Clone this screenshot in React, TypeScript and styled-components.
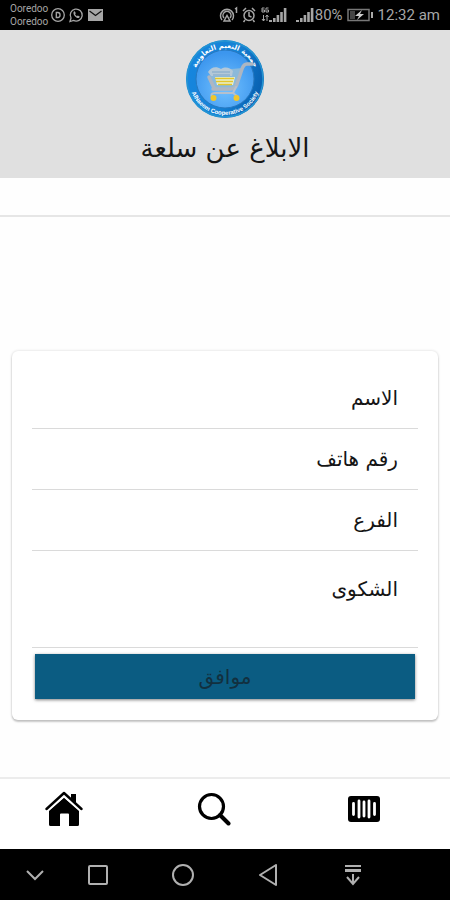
import React from "react";
import styled, { createGlobalStyle } from "styled-components";

const GlobalStyle = createGlobalStyle`
  *, *::before, *::after { box-sizing: border-box; }
  body { margin: 0; background: #fefefe; }
  button, input, textarea { font: inherit; color: inherit; }
  svg { display: block; flex: none; }
`;

const Page = styled.div`
  min-height: 100vh;
  display: flex;
  flex-direction: column;
  font-family: "DejaVu Sans", sans-serif;
  color: #151515;
`;

const StatusBar = styled.div`
  height: 30px;
  padding: 0 10px;
  display: flex;
  align-items: center;
  justify-content: space-between;
  background: #000;
  color: #a6a6a6;
  font-family: Roboto, sans-serif;
  font-size: 15px;
  white-space: nowrap;
`;

const StatusGroup = styled.div<{ $gap: number }>`
  display: flex;
  align-items: center;
  gap: ${(p) => p.$gap}px;
`;

const Carriers = styled.div`
  display: flex;
  flex-direction: column;
  font-size: 10px;
  line-height: 13px;
`;

const Header = styled.header`
  height: 148px;
  display: flex;
  flex-direction: column;
  align-items: center;
  padding-top: 9px;
  background: #e0e0e0;
`;

const Title = styled.h1`
  margin: 9px 0 0;
  font-size: 26px;
  line-height: 40px;
  font-weight: 400;
`;

const Divider = styled.hr`
  width: 100%;
  height: 2px;
  margin: 37px 0 0;
  border: 0;
  background: #e6e6e6;
`;

const Main = styled.main`
  flex: 1;
  padding: 134px 12px 40px;
`;

const Card = styled.form`
  padding: 17px 20px 21px;
  border-radius: 6px;
  background: #fff;
  box-shadow: 0 2px 2px rgba(0, 0, 0, 0.2), 0 0 3px rgba(0, 0, 0, 0.16);
`;

const Field = styled.div<{ $tall?: boolean }>`
  display: flex;
  align-items: ${(p) => (p.$tall ? "flex-start" : "center")};
  gap: 12px;
  height: ${(p) => (p.$tall ? 97 : 61)}px;
  padding: ${(p) => (p.$tall ? "22px 20px 8px" : "0 20px")};
  border-bottom: 1px solid #dadada;
`;

const Label = styled.label`
  font-size: 20px;
  line-height: 32px;
`;

const TextInput = styled.input`
  flex: 1;
  min-width: 0;
  height: 40px;
  border: 0;
  outline: 0;
  background: transparent;
`;

const TextArea = styled.textarea`
  flex: 1;
  min-width: 0;
  height: 60px;
  border: 0;
  outline: 0;
  resize: none;
  background: transparent;
`;

const Submit = styled.button`
  display: block;
  width: calc(100% - 6px);
  height: 45px;
  margin: 6px 3px 0;
  padding: 0;
  border: 0;
  background: #0b5c82;
  color: #12303f;
  font-size: 20px;
  box-shadow: 0 1px 3px rgba(0, 0, 0, 0.5);
`;

const TabBar = styled.nav`
  display: grid;
  grid-template-columns: repeat(3, 1fr);
  height: 72px;
  border-top: 2px solid #ececec;
  background: #fff;
`;

const Tab = styled.a`
  display: flex;
  align-items: center;
  justify-content: center;
  padding: 0 22px 10px 0;
  color: #000;
`;

const SystemBar = styled.div`
  display: grid;
  grid-template-columns: 55fr 85fr 85fr 85fr 85fr 55fr;
  height: 51px;
  background: #000;
`;

const SystemButton = styled.button<{ $edge?: boolean }>`
  display: flex;
  align-items: center;
  justify-content: center;
  padding: ${(p) => (p.$edge ? "0 0 0 14px" : "0")};
  border: 0;
  background: transparent;
  color: #b0b0b0;
`;

const Signal = () => (
  <svg width="18" height="16" viewBox="0 0 18 16" fill="currentColor" aria-hidden="true">
    <path d="M0 13h3v2H0zM4 11h2.6v4H4zM7.6 8h2.6v7H7.6zM11.2 5h2.6v10h-2.6zM14.8 1h2.6v14h-2.6z" />
  </svg>
);

const Logo = () => (
  <svg width="80" height="80" viewBox="0 0 80 80" role="img" aria-label="شعار الجمعية">
    <defs>
      <linearGradient id="ring" x1="0" x2="1" y1="0.3" y2="0.6">
        <stop offset="0" stopColor="#1686df" />
        <stop offset="0.55" stopColor="#1682d5" />
        <stop offset="1" stopColor="#075eae" />
      </linearGradient>
      <radialGradient id="disc" cx="0.5" cy="0.65" r="0.6">
        <stop offset="0" stopColor="#72c1ff" />
        <stop offset="1" stopColor="#3c96ee" />
      </radialGradient>
      <path id="arcTop" d="M9 40a31 31 0 0 1 62 0" />
      <path id="arcBottom" d="M4 40a36 36 0 0 0 72 0" />
    </defs>
    <circle cx="40" cy="40" r="39" fill="url(#ring)" />
    <circle cx="40" cy="40" r="38" fill="none" stroke="#2494d2" strokeWidth="1.5" />
    <circle cx="40" cy="40" r="29" fill="url(#disc)" stroke="#2878bf" strokeWidth="1" />
    <text fill="#fff" fontSize="7" fontWeight="700" fontFamily="DejaVu Sans, sans-serif" direction="rtl">
      <textPath href="#arcTop" startOffset="50%" textAnchor="middle">جمعية النعيم التعاونية</textPath>
    </text>
    <text fill="#fff" fontSize="6" fontWeight="700" fontFamily="Liberation Sans, sans-serif" direction="ltr">
      <textPath href="#arcBottom" startOffset="50%" textAnchor="middle">AlNaeem Cooperative Society</textPath>
    </text>
    <path d="M24 32l5 17h21l8-20z" fill="#8bb9da" />
    <path d="M23 33c3-5 8-6 13-3 5-3 9-1 12 2l-1 5H26z" fill="#b4c8d8" />
    <path d="M27 33h18M28 36h17" stroke="#7fa6c8" strokeWidth="1" />
    <path d="M30 38h20l-2 8H32z" fill="#e8efd0" />
    <path d="M30 39.500h19M31 42.500h17M33 45.500h14" stroke="#e3c52c" strokeWidth="1.700" />
    <path d="M67 25h-5c-3 0-4 2-5 5l-5 15c-1 4-3 5-7 5H28M24 38l5 11" fill="none" stroke="#aeb6c1" strokeWidth="3.500" strokeLinecap="round" strokeLinejoin="round" />
    <path d="M51 48l-3 6H30c-4 0-4 2-3 4M48 54l4 3" fill="none" stroke="#b5c0cd" strokeWidth="2" strokeLinecap="round" />
    <circle cx="28.500" cy="59" r="3" fill="#efc62c" />
    <circle cx="51.500" cy="59" r="3" fill="#efc62c" />
  </svg>
);

export default function App() {
  return (
    <Page dir="rtl" lang="ar">
      <GlobalStyle />
      <StatusBar dir="ltr">
        <StatusGroup $gap={3}>
          <Carriers>
            <span>Ooredoo</span>
            <span>Ooredoo</span>
          </Carriers>
          <svg width="54" height="16" viewBox="0 0 54 16" fill="none" stroke="currentColor" strokeWidth="1.300" aria-hidden="true">
            <circle cx="7" cy="8" r="6.300" />
            <path d="M5.300 5.500h1.500c3 0 3 5 0 5H5.300z" />
            <path d="M19 14.500l1-3.500a6 6 0 1 1 2.500 2.400z" />
            <path d="M23 4.500c-2 2 2 7.500 5 6.500l.8-1.500-2-1-1 .8-1.800-2 .8-1-1-2z" fill="currentColor" stroke="none" />
            <rect x="37" y="2" width="15" height="12" fill="currentColor" stroke="none" />
            <path d="M38.500 4l6 4.500 6-4.500" stroke="#111" />
          </svg>
        </StatusGroup>
        <StatusGroup $gap={4}>
          <svg width="38" height="18" viewBox="0 0 38 18" fill="none" stroke="currentColor" strokeWidth="1.500" aria-hidden="true">
            <path d="M3 14a6.500 6.500 0 1 1 10 0M5 12a4 4 0 1 1 6 0M8 9.500l-3 5.500h6zM16 3l1.500-1v5" />
            <circle cx="30" cy="9.500" r="5" />
            <path d="M30 6v4l2.500 1M24 5l3-3M36 5l-3-3M26 14l-1.500 2M34 14l1.500 2" />
          </svg>
          <StatusGroup $gap={0}>
            <svg width="8" height="16" viewBox="0 0 8 16" fill="none" stroke="currentColor" aria-hidden="true">
              <path d="M3.500 1H1v4h2.500V3H1M7.500 1H5v4h2.500V3H6M2.500 8v6M1 12l1.500 2L4 12M6 14V8M4.500 10L6 8l1.500 2" />
            </svg>
            <Signal />
          </StatusGroup>
          <StatusGroup $gap={1}>
            <svg width="4" height="1" aria-hidden="true" />
            <Signal />
            <span>80%</span>
          </StatusGroup>
          <svg width="27" height="14" viewBox="0 0 27 14" aria-hidden="true">
            <rect x="1" y="1.500" width="21" height="11" fill="none" stroke="#777" strokeWidth="1.500" />
            <rect x="3" y="3" width="5" height="8" fill="#444" />
            <path d="M15 2L8 8h4l-2 4 7-6h-4z" fill="#ccc" />
            <path d="M25 4v6" stroke="#aaa" strokeWidth="2" />
          </svg>
          <span>12:32 am</span>
        </StatusGroup>
      </StatusBar>

      <Header>
        <Logo />
        <Title>الابلاغ عن سلعة</Title>
      </Header>
      <Divider />

      <Main>
        <Card onSubmit={(e) => e.preventDefault()}>
          <Field>
            <Label htmlFor="name">الاسم</Label>
            <TextInput id="name" type="text" />
          </Field>
          <Field>
            <Label htmlFor="phone">رقم هاتف</Label>
            <TextInput id="phone" type="tel" />
          </Field>
          <Field>
            <Label htmlFor="branch">الفرع</Label>
            <TextInput id="branch" type="text" />
          </Field>
          <Field $tall>
            <Label htmlFor="complaint">الشكوى</Label>
            <TextArea id="complaint" />
          </Field>
          <Submit type="submit">موافق</Submit>
        </Card>
      </Main>

      <TabBar dir="ltr">
        <Tab href="#home" aria-label="الرئيسية">
          <svg width="38" height="36" viewBox="0 0 38 36" fill="currentColor" aria-hidden="true">
            <path d="M26 3h5v12l-5-5z" />
            <path d="M4 19.500L19 6.500l15 13v14q0 1.500-1.500 1.500H24V23.500q0-1-1-1h-7q-1 0-1 1V35H5.500Q4 35 4 33.500z" />
            <path d="M2 18.500L19 3.500l17 15" fill="none" stroke="#fff" strokeWidth="5" />
            <path d="M1.500 18L19 2l17.500 16" fill="none" stroke="currentColor" strokeWidth="2.400" strokeLinecap="round" strokeLinejoin="round" />
            <path d="M26 3h5v9l-5-4.500z" />
          </svg>
        </Tab>
        <Tab href="#search" aria-label="بحث">
          <svg width="34" height="34" viewBox="0 0 34 34" fill="none" stroke="currentColor" aria-hidden="true">
            <circle cx="14.500" cy="14.500" r="12" strokeWidth="3.200" />
            <path d="M23 23l8.500 8.500" strokeWidth="4" strokeLinecap="round" />
          </svg>
        </Tab>
        <Tab href="#scan" aria-label="مسح الرمز">
          <svg width="32" height="26" viewBox="0 0 32 26" aria-hidden="true">
            <rect width="32" height="26" rx="3" />
            <path d="M5.500 7.500v11M26.500 7.500v11M11 5v16M16 6v14M21 5v16" stroke="#fff" strokeWidth="2.800" strokeLinecap="round" />
          </svg>
        </Tab>
      </TabBar>

      <SystemBar dir="ltr">
        <SystemButton $edge aria-label="إخفاء الشريط">
          <svg width="18" height="12" viewBox="0 0 18 12" fill="none" stroke="currentColor" strokeWidth="2">
            <path d="M1 2l8 8 8-8" />
          </svg>
        </SystemButton>
        <SystemButton aria-label="التطبيقات الأخيرة">
          <svg width="20" height="20" viewBox="0 0 20 20" fill="none" stroke="currentColor" strokeWidth="2">
            <rect x="1" y="1" width="18" height="18" rx="1" />
          </svg>
        </SystemButton>
        <SystemButton aria-label="الشاشة الرئيسية">
          <svg width="22" height="22" viewBox="0 0 22 22" fill="none" stroke="currentColor" strokeWidth="2">
            <circle cx="11" cy="11" r="10" />
          </svg>
        </SystemButton>
        <SystemButton aria-label="رجوع">
          <svg width="20" height="22" viewBox="0 0 20 22" fill="none" stroke="currentColor" strokeWidth="2" strokeLinejoin="round">
            <path d="M18 1v20L2 11z" />
          </svg>
        </SystemButton>
        <SystemButton aria-label="الإشعارات">
          <svg width="18" height="22" viewBox="0 0 18 22" fill="none" stroke="currentColor" strokeWidth="2">
            <path d="M1 2h16M9 10v10M3 13l6 7 6-7" />
            <path d="M1 6.500h16" strokeWidth="3" />
          </svg>
        </SystemButton>
      </SystemBar>
    </Page>
  );
}
